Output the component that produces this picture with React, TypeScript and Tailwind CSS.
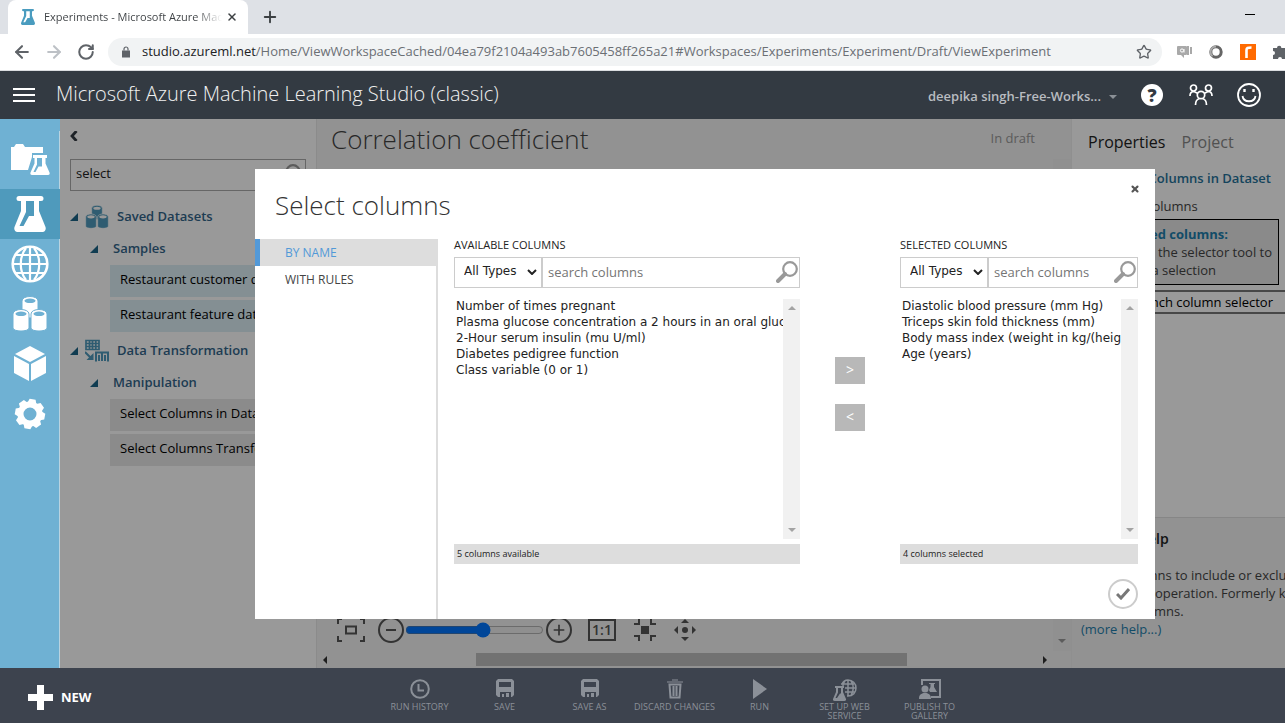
import React from 'react';
import { ArrowLeft, ArrowRight, Plus, RotateCw, Star, X } from 'lucide-react';

const datasets = ['Restaurant customer data', 'Restaurant feature data'];
const modules = ['Select Columns in Dataset', 'Select Columns Transform'];

const availableColumns = [
  'Number of times pregnant',
  'Plasma glucose concentration a 2 hours in an oral glucose tolerance test',
  '2-Hour serum insulin (mu U/ml)',
  'Diabetes pedigree function',
  'Class variable (0 or 1)',
];

const selectedColumns = [
  'Diastolic blood pressure (mm Hg)',
  'Triceps skin fold thickness (mm)',
  'Body mass index (weight in kg/(height in m)^2)',
  'Age (years)',
];

type IconProps = { className?: string };

const FlaskIcon = ({ className }: IconProps) => (
  <svg viewBox="0 0 32 36" className={className} fill="currentColor" aria-hidden="true">
    <path
      fillRule="evenodd"
      d="M5 0h22a1.500 1.500 0 0 1 0 5h-2v10l6.500 16c.8 2.500-.5 5-3 5h-25c-2.500 0-3.800-2.500-3-5L7 15V5H5a1.500 1.500 0 0 1 0-5ZM12 5v11L5.500 30h4l5.500-10h5V5Z"
    />
  </svg>
);

const FolderFlaskIcon = ({ className }: IconProps) => (
  <svg viewBox="0 0 40 32" className={className} fill="currentColor" aria-hidden="true">
    <path d="M1 3h3l2-3h7l2 3h18v6H22v4l-4 13H1Z" />
    <path
      fillRule="evenodd"
      d="M23 11h14v3h-1.500v5.500l4 9c.5 1.500 0 2.500-1.500 2.500H22c-1.500 0-2-1-1.500-2.500l4-9V14H23Zm4 3v6.500L23.500 28h2l3-5.500H32V14Z"
    />
  </svg>
);

const GlobeIcon = ({ className }: IconProps) => (
  <svg viewBox="0 0 38 38" className={className} fill="none" stroke="currentColor" strokeWidth="2.600" aria-hidden="true">
    <circle cx="19" cy="19" r="17.300" />
    <path d="M19 2v34M2 19h34M5 10h28M5 28h28M15 3c-7 9-7 23 0 32M23 3c7 9 7 23 0 32" strokeWidth="2.200" />
  </svg>
);

const CylindersIcon = ({ className }: IconProps) => (
  <svg viewBox="0 0 34 36" className={className} aria-hidden="true">
    {[
      [9, 0],
      [0, 13],
      [18, 13],
    ].map(([x, y]) => (
      <g key={`${x}-${y}`} transform={`translate(${x} ${y})`}>
        <path
          d="M0 5c0-6 16-6 16 0v14c0 4-16 4-16 0Z"
          fill="currentColor"
          stroke="var(--cut)"
          strokeWidth="1"
        />
        <ellipse cx="8" cy="4.800" rx="5.500" ry="2.300" fill="var(--cut)" />
      </g>
    ))}
  </svg>
);

const CubeIcon = ({ className }: IconProps) => (
  <svg viewBox="0 0 34 36" className={className} fill="currentColor" aria-hidden="true">
    <path d="M17 0 32 8 17 16 2 8ZM1 10l15 8v17L1 27ZM33 10l-15 8v17l15-8Z" />
  </svg>
);

const GearIcon = ({ className }: IconProps) => (
  <svg viewBox="0 0 32 32" className={className} aria-hidden="true">
    <circle cx="16" cy="16" r="9.500" fill="none" stroke="currentColor" strokeWidth="6" />
    {[10, 55, 100, 145, 190, 235, 280, 325].map((deg) => (
      <path key={deg} d="M11.500 5 13 1h6l1.500 4Z" fill="currentColor" transform={`rotate(${deg} 16 16)`} />
    ))}
  </svg>
);

const TransformIcon = ({ className }: IconProps) => (
  <svg viewBox="0 0 24 24" className={className} fill="none" stroke="currentColor" aria-hidden="true">
    <path d="M1 1.500h13v9H1ZM1 4.500h13M1 7.500h13M4.500 1.500v9M7.500 1.500v9M10.800 1.500v9" strokeWidth="1.700" />
    <path d="m0 13 6 6" strokeWidth="2" />
    <path d="M8.500 14v7h-7Z" fill="currentColor" stroke="none" />
    <path d="M11 22.500v-9h12v9M14 22v-6M17 22v-8M20 22v-6" strokeWidth="2" />
  </svg>
);

const SearchIcon = ({ className }: IconProps) => (
  <svg viewBox="0 0 22 22" className={className} fill="none" stroke="#999999" aria-hidden="true">
    <circle cx="14" cy="8" r="6.800" strokeWidth="2.200" />
    <path d="M9 13 2 20" strokeWidth="4" strokeLinecap="round" />
  </svg>
);

const PeopleIcon = ({ className }: IconProps) => (
  <svg viewBox="0 0 24 22" className={className} fill="none" stroke="currentColor" strokeWidth="1.700" aria-hidden="true">
    <circle cx="4.500" cy="4" r="3" />
    <circle cx="19.500" cy="4" r="3" />
    <circle cx="12" cy="11" r="3.700" />
    <path d="M1 12c0-3 2-4.500 4-4.500l4 2M23 12c0-3-2-4.500-4-4.500l-4 2M6.500 21c0-4 2-6 4-6.500M17.500 21c0-4-2-6-4-6.500" />
  </svg>
);

const SaveIcon = ({ className }: IconProps) => (
  <svg viewBox="0 0 18 18" className={className} fill="currentColor" aria-hidden="true">
    <path fillRule="evenodd" d="M2 0h14l2 2v14l-2 2h-1v-5H4v5H2l-2-2V2ZM3 3v5h12V3Z" />
    <path d="M6 15h2v3H6zM10 14h3v4h-3z" />
  </svg>
);

const actions = [
  {
    label: 'RUN HISTORY',
    icon: (
      <svg viewBox="0 0 20 20" className="size-5" fill="none" stroke="currentColor" strokeWidth="2">
        <circle cx="10" cy="10" r="8.800" />
        <path d="M8.500 5v6.500H14" />
      </svg>
    ),
  },
  { label: 'SAVE', icon: <SaveIcon className="size-[18px]" /> },
  { label: 'SAVE AS', icon: <SaveIcon className="size-[18px]" /> },
  {
    label: 'DISCARD CHANGES',
    icon: (
      <svg viewBox="0 0 16 20" className="h-5 w-4" fill="none" stroke="currentColor" strokeWidth="2">
        <path d="M0 3h16M5 1h6" strokeWidth="1.200" />
        <path d="M2.500 5.500h11l-1 13h-9ZM6.500 7v10M9.500 7v10" />
      </svg>
    ),
  },
  {
    label: 'RUN',
    icon: (
      <svg viewBox="0 0 14 20" className="h-5 w-3.5" fill="currentColor">
        <path d="M0 0v20l14-10Z" />
      </svg>
    ),
  },
  {
    label: 'SET UP WEB SERVICE',
    icon: (
      <svg viewBox="0 0 24 22" className="h-[22px] w-6" fill="none" stroke="currentColor">
        <path
          d="M9 5.500C10 2.500 12.500 1 15 1c4.500 0 8 3.500 8 8s-3 8-8 8h-1M15 1v16M8 5h13M12 9h11M12 13h9.500M12 2c-1 1-2 3-2 5M18 2c3 4 3 10 0 14"
          strokeWidth="1.500"
        />
        <path
          fill="currentColor"
          stroke="none"
          fillRule="evenodd"
          d="M2 7h9v2h-1v4l3 7c.3 1.500-.5 2-1.500 2h-10C.5 22-.3 21.500 0 20l3-7V9H2Zm3 2v4.500L2.500 19H4l3-4.500h1V9Z"
        />
      </svg>
    ),
  },
  {
    label: 'PUBLISH TO GALLERY',
    icon: (
      <svg viewBox="0 0 22 20" className="h-5 w-[22px]" fill="currentColor">
        <path d="M2 6V0h20v19H12v-2h8V2H4v4Z" />
        <circle cx="6" cy="10" r="3.500" />
        <path d="M0 20c0-5 2.500-5 4.500-6h3c2 1 4.500 1 4.500 6ZM10 4h6v1h-1v3l3 5h-7l-1-2 1.500-3V5H10Z" />
      </svg>
    ),
  },
];

const BrowserChrome = () => (
  <div className="shrink-0 border-b border-[#dadce0] bg-white">
    <div className="flex h-[34px] items-start bg-[#dee1e6] pl-2">
      <div className="flex h-[34px] w-60 items-center rounded-t-lg bg-white pl-3">
        <FlaskIcon className="h-4 w-4 shrink-0 text-[#4a9cbf]" />
        <span className="ml-2 flex-1 overflow-hidden whitespace-nowrap bg-linear-to-r from-[#3c4043] from-85% to-transparent bg-clip-text text-[11px] text-transparent">
          Experiments - Microsoft Azure Machine Learning
        </span>
        <button aria-label="Close tab" className="mr-1.5 p-1 text-[#3c4043]">
          <X size={12} strokeWidth={3} />
        </button>
      </div>
      <button aria-label="New tab" className="ml-[13px] mt-2 text-[#3c4043]">
        <Plus size={18} strokeWidth={2.500} />
      </button>
      <button aria-label="Minimize" className="ml-auto mr-7 h-7 w-3">
        <span className="block h-px w-2.5 bg-black" />
      </button>
    </div>
    <div className="flex h-9 items-center pl-3">
      <button aria-label="Back" className="text-[#5f6368]">
        <ArrowLeft size={20} strokeWidth={2.500} />
      </button>
      <button aria-label="Forward" className="ml-3 text-[#bdc1c6]">
        <ArrowRight size={20} strokeWidth={2.500} />
      </button>
      <button aria-label="Reload" className="ml-[13px] text-[#5f6368]">
        <RotateCw size={18} strokeWidth={2.700} />
      </button>
      <div className="ml-[13px] flex h-7 flex-1 items-center overflow-hidden rounded-full bg-[#f1f3f4] pl-3.5 pr-2.5">
        <svg viewBox="0 0 8 11" className="h-3 w-2 shrink-0 text-[#5f6368]" aria-hidden="true">
          <path d="M0 4h8v7H0Z" fill="currentColor" />
          <path d="M2 4V2.500a2 2 0 0 1 4 0V4" fill="none" stroke="currentColor" strokeWidth="1.200" />
        </svg>
        <span className="ml-3 flex-1 overflow-hidden whitespace-nowrap text-[13px] text-[#6b6f74]">
          <span className="text-[#202124]">studio.azureml.net</span>
          /Home/ViewWorkspaceCached/04ea79f2104a493ab7605458ff265a21#Workspaces/Experiments/Experiment/Draft/ViewExperiment
        </span>
        <Star size={16} className="shrink-0 text-[#5f6368]" strokeWidth={2} />
      </div>
      <div className="ml-3.5 flex w-[109px] shrink-0 items-center overflow-hidden">
        <svg viewBox="0 0 16 14" className="h-3.5 w-4 shrink-0" aria-hidden="true">
          <path d="M2 1h8a1 1 0 0 1 1 1v7a1 1 0 0 1-1 1H8v3l-3-3H2a1 1 0 0 1-1-1V2a1 1 0 0 1 1-1ZM11 1h2v9h-2ZM14 2h2v7h-2Z" fill="#a9a9a9" />
          <circle cx="6" cy="5.500" r="1.600" fill="none" stroke="white" />
          <path d="M8 4v3.500" stroke="white" />
        </svg>
        <svg viewBox="0 0 14 14" className="ml-[17px] size-3.5 shrink-0" aria-hidden="true">
          <circle cx="7" cy="7" r="5.200" fill="none" stroke="#666" strokeWidth="3" />
          <path d="M7 1.500A5.500 5.500 0 0 0 1.500 7c0 2 1 3.500 2 4.300" fill="none" stroke="#aaa" strokeWidth="2" />
        </svg>
        <svg viewBox="0 0 16 16" className="ml-[17px] size-4 shrink-0" aria-hidden="true">
          <path d="M0 0h16v16H0Z" fill="#ff6a00" />
          <path d="M6.500 14V6c0-2 1-2.500 5-2.500" fill="none" stroke="white" strokeWidth="2.600" />
        </svg>
        <svg viewBox="0 0 16 16" className="ml-4 size-4 shrink-0" aria-hidden="true">
          <path d="M1 4h4a2.200 2.200 0 0 1 4.400 0H14v4.500a2.200 2.200 0 0 1 0 4V15h-4a2 2 0 0 0-4 0H1v-4a2 2 0 0 0 0-4Z" fill="#5f6368" />
        </svg>
      </div>
    </div>
  </div>
);

const Header = () => (
  <header className="flex h-12 shrink-0 items-center bg-[#333a42] pl-[13px] pr-6 text-white">
    <button aria-label="Menu" className="flex w-[22px] flex-col gap-1">
      <span className="h-0.5 bg-white" />
      <span className="h-0.5 bg-white" />
      <span className="h-0.5 bg-white" />
    </button>
    <h1 className="ml-[21px] whitespace-nowrap pb-0.5 text-xl font-light text-[#f0f0f0]">
      Microsoft Azure Machine Learning Studio (classic)
    </h1>
    <button className="ml-auto flex items-center gap-2 whitespace-nowrap pt-1 text-[13px] font-semibold text-[#b9bcc0]">
      deepika singh-Free-Works...
      <svg viewBox="0 0 8 4" className="h-1 w-2" fill="#8b9096">
        <path d="M0 0h8L4 4Z" />
      </svg>
    </button>
    <button aria-label="Help" className="ml-6 flex size-[22px] items-center justify-center rounded-full bg-white text-lg font-extrabold text-[#333a42]">
      ?
    </button>
    <button aria-label="Community" className="ml-[26px]">
      <PeopleIcon className="h-[22px] w-6" />
    </button>
    <button aria-label="Feedback" className="ml-6">
      <svg viewBox="0 0 24 24" className="size-6" fill="none" stroke="currentColor" strokeWidth="1.800">
        <circle cx="12" cy="12" r="11" />
        <path d="M5.500 13c1 7 12 7 13 0" />
        <path d="M7.500 6v3M16.500 6v3" strokeWidth="2.400" />
      </svg>
    </button>
  </header>
);

const NavRail = () => {
  const items = [
    { label: 'Projects', icon: <FolderFlaskIcon className="h-8 w-10" /> },
    { label: 'Experiments', icon: <FlaskIcon className="h-9 w-8" />, active: true },
    { label: 'Web services', icon: <GlobeIcon className="size-[38px]" /> },
    { label: 'Datasets', icon: <CylindersIcon className="h-9 w-[34px]" /> },
    { label: 'Trained models', icon: <CubeIcon className="h-9 w-[34px]" /> },
    { label: 'Settings', icon: <GearIcon className="size-8" /> },
  ];
  return (
    <nav className="flex w-[60px] shrink-0 flex-col bg-[#6fb1d3] pt-3 text-white [--cut:#6fb1d3]">
      {items.map((item) => (
        <button
          key={item.label}
          aria-label={item.label}
          className={`flex h-[50px] items-center justify-center first:h-[58px] ${item.active ? 'bg-[#4f9abc]' : 'border-r border-[#b9d3e0]'}`}
        >
          {item.icon}
        </button>
      ))}
      <div className="flex-1 border-r border-[#b9d3e0]" />
    </nav>
  );
};

const Caret = () => (
  <svg viewBox="0 0 8 8" className="size-2" fill="#1c6488" aria-hidden="true">
    <path d="M8 0v8H0Z" />
  </svg>
);

const ModulePanel = () => (
  <aside className="flex w-64 shrink-0 flex-col bg-white px-2.5 text-[13px]">
    <button aria-label="Collapse panel" className="mt-3 h-[10px] w-2.5">
      <svg viewBox="0 0 8 10" className="h-2.5 w-2" fill="none" stroke="#333a42" strokeWidth="2.800">
        <path d="M6.500 0 2 5l4.500 5" />
      </svg>
    </button>
    <div className="mt-[18px] flex h-8 shrink-0 items-center border border-[#aaaaaa] pr-1">
      <input
        aria-label="Search modules"
        defaultValue="select"
        className="min-w-0 flex-1 bg-transparent px-[5px] pb-0.5 text-[#222222] outline-none"
      />
      <SearchIcon className="size-[22px]" />
    </div>
    <div className="mt-2.5">
      <button className="flex h-8 w-full items-center font-semibold text-[#33658a]">
        <Caret />
        <CylindersIcon className="ml-[7px] size-6 text-[#4f9abc] [--cut:#ffffff]" />
        <span className="ml-2">Saved Datasets</span>
      </button>
      <button className="flex h-8 w-full items-center pl-5 font-semibold text-[#33658a]">
        <Caret />
        <span className="ml-[15px]">Samples</span>
      </button>
      {datasets.map((name) => (
        <div key={name} className="mb-[3px] ml-10 flex h-8 items-center overflow-hidden whitespace-nowrap bg-[#dceef5] pb-0.5 pl-2.5 text-black">
          {name}
        </div>
      ))}
      <button className="flex h-8 w-full items-center font-semibold text-[#33658a]">
        <Caret />
        <TransformIcon className="ml-[7px] size-6 text-[#4f9abc]" />
        <span className="ml-2">Data Transformation</span>
      </button>
      <button className="flex h-8 w-full items-center pl-5 font-semibold text-[#33658a]">
        <Caret />
        <span className="ml-[15px]">Manipulation</span>
      </button>
      {modules.map((name) => (
        <div key={name} className="mb-[3px] ml-10 flex h-8 items-center overflow-hidden whitespace-nowrap bg-[#e8e8e8] pb-0.5 pl-2.5 text-black">
          {name}
        </div>
      ))}
    </div>
  </aside>
);

const ZoomControls = () => (
  <div className="flex h-8 items-center pl-[19px] text-[#555555]">
    <button aria-label="Zoom to selection">
      <svg viewBox="0 0 30 24" className="h-6 w-[30px]" fill="none" stroke="currentColor" strokeWidth="2">
        <path d="M2 6V1h4M24 1h4v5M2 18v5h4M24 23h4v-5M10 8.500h10v7H10Z" />
      </svg>
    </button>
    <button aria-label="Zoom out" className="ml-3 flex size-[26px] items-center justify-center rounded-full border-2 border-[#555555]">
      <span className="h-0.5 w-2.5 bg-[#555555]" />
    </button>
    <input type="range" aria-label="Zoom" defaultValue={57} className="ml-px w-[139px]" />
    <button aria-label="Zoom in" className="ml-0.5 flex size-[26px] items-center justify-center rounded-full border-2 border-[#555555]">
      <Plus size={16} strokeWidth={2.500} />
    </button>
    <button className="ml-4 flex h-[22px] w-7 items-center justify-center border-2 border-[#555555] text-sm font-semibold">
      1:1
    </button>
    <button aria-label="Fit to screen" className="ml-[18px]">
      <svg viewBox="0 0 22 22" className="size-[22px]" fill="none" stroke="currentColor" strokeWidth="2">
        <path d="M0 5h5V0M17 0v5h5M0 17h5v5M17 22v-5h5" />
        <path d="M7 7h8v8H7Z" fill="currentColor" stroke="none" />
      </svg>
    </button>
    <button aria-label="Pan" className="ml-[18px]">
      <svg viewBox="0 0 22 22" className="size-[22px]" fill="currentColor">
        <circle cx="11" cy="11" r="3" />
        <path d="m11 0 4 4H7ZM11 22l4-4H7ZM0 11l4-4v8ZM22 11l-4-4v8Z" />
      </svg>
    </button>
  </div>
);

const Canvas = () => (
  <main className="flex min-w-0 flex-1 flex-col border-l border-[#e8e8e8] bg-[#f3f3f3]">
    <div className="flex items-center justify-between pl-[14px] pr-9">
      <h2 className="text-[26px] leading-10 font-light text-[#444444]">Correlation coefficient</h2>
      <span className="text-[13px] text-[#999999]">In draft</span>
    </div>
    <div className="flex flex-1">
      <div className="flex flex-1 flex-col justify-end pb-[5px]">
        <ZoomControls />
      </div>
      <div className="flex w-[18px] flex-col items-center justify-end bg-[#f1f1f1] pb-2">
        <svg viewBox="0 0 8 4" className="h-1 w-2" fill="#999999">
          <path d="M0 0h8L4 4Z" />
        </svg>
      </div>
    </div>
    <div className="flex h-[17px] items-center pl-1.5 pr-6">
      <svg viewBox="0 0 4 8" className="h-2 w-1 shrink-0" fill="#333333">
        <path d="M4 0v8L0 4Z" />
      </svg>
      <div className="ml-[149px] mr-[136px] h-[13px] flex-1 bg-[#bfbfbf]" />
      <svg viewBox="0 0 4 8" className="h-2 w-1 shrink-0" fill="#333333">
        <path d="M0 0v8l4-4Z" />
      </svg>
    </div>
  </main>
);

const PropertiesPanel = () => (
  <aside className="flex w-[214px] shrink-0 flex-col overflow-hidden whitespace-nowrap border-l border-[#eeeeee] bg-white text-[13px] text-[#444444]">
    <div className="flex gap-4 pl-4 pt-2.5 text-base leading-[26px]">
      <button className="text-[#222222]">Properties</button>
      <button className="text-[#888888]">Project</button>
    </div>
    <h3 className="mt-[11px] pr-3.5 text-right font-semibold leading-6 text-[#26739b]">Select Columns in Dataset</h3>
    <p className="mt-1.5 pl-[35px] leading-5">Select columns</p>
    <div className="ml-2.5 mr-1.5 mt-[3px] border border-black bg-[#e6e6e6] px-1.5 py-[5px] text-right leading-[18px]">
      <p className="pr-11 font-bold text-[#1f7fad]">Selected columns:</p>
      <p>Launch the selector tool to</p>
      <p className="pr-14">make a selection</p>
    </div>
    <button className="ml-2.5 mt-[5px] h-6 border-y-2 border-[#777777] pr-3 text-right leading-[18px] text-black">
      Launch column selector
    </button>
    <div className="mt-auto h-[151px] border-t border-[#e0e0e0] bg-[#f3f3f3] pl-[9px] pt-3">
      <h3 className="pl-3.5 text-sm font-semibold leading-[18px] text-[#222222]">Quick Help</h3>
      <p className="mt-[18px] leading-[18px]">
        Select columns to include or exclude
        <br />
        from a data operation. Formerly known as
        <br />
        Project Columns.
        <br />
        <a href="#help" className="text-[#1f7fad]">(more help...)</a>
      </p>
    </div>
  </aside>
);

type ColumnListProps = {
  id: string;
  title: string;
  columns: string[];
  status: string;
  className: string;
};

const ColumnList = ({ id, title, columns, status, className }: ColumnListProps) => (
  <section className={className}>
    <label htmlFor={id} className="block h-[18px] text-[11px] leading-3 text-[#222222]">
      {title}
    </label>
    <div className="flex h-[31px] border border-[#cccccc]">
      <div className="relative flex w-[88px] shrink-0 border-r-2 border-[#cccccc]">
        <select
          aria-label={`${title} type`}
          className="w-full appearance-none bg-white pb-0.5 pl-[9px] font-['DejaVu_Sans',sans-serif] text-xs text-[#222222]"
        >
          <option>All Types</option>
        </select>
        <svg viewBox="0 0 10 6" className="pointer-events-none absolute right-1 top-[11px] h-1.5 w-2.5" fill="none" stroke="#222222" strokeWidth="2">
          <path d="m1 1 4 4 4-4" />
        </svg>
      </div>
      <input
        aria-label={`Search ${title.toLowerCase()}`}
        placeholder="search columns"
        className="min-w-0 flex-1 px-[5px] pt-0.5 text-[13px] outline-none placeholder:text-[#757575]"
      />
      <button aria-label="Search" className="mr-px">
        <SearchIcon className="size-[22px]" />
      </button>
    </div>
    <div className="mt-[11px] flex h-60">
      <select
        id={id}
        multiple
        className="min-w-0 flex-1 overflow-hidden bg-white font-['DejaVu_Sans',sans-serif] text-xs text-[#222222] outline-none"
      >
        {columns.map((column) => (
          <option key={column} className="h-4 px-0.5 py-0 leading-4">
            {column}
          </option>
        ))}
      </select>
      <div className="flex w-[17px] flex-col items-center justify-between bg-[#f1f1f1] py-[7px]">
        <svg viewBox="0 0 8 4" className="h-1 w-2" fill="#a3a3a3">
          <path d="M4 0l4 4H0Z" />
        </svg>
        <svg viewBox="0 0 8 4" className="h-1 w-2" fill="#a3a3a3">
          <path d="M0 0h8L4 4Z" />
        </svg>
      </div>
    </div>
    <p className="mt-[5px] h-5 bg-[#dddddd] pl-[3px] text-[9px] leading-5 text-[#222222]">{status}</p>
  </section>
);

const SelectColumnsDialog = () => (
  <div role="dialog" aria-label="Select columns" className="flex h-[450px] w-[900px] shrink-0 flex-col bg-white">
    <div className="flex h-[70px] shrink-0 justify-between pl-5 pr-[15px]">
      <h2 className="pt-4 text-[26px] leading-10 font-light text-[#333333]">Select columns</h2>
      <button aria-label="Close" className="mt-[15px] h-2 text-[#555555]">
        <X size={10} strokeWidth={5} />
      </button>
    </div>
    <div className="flex flex-1">
      <div className="flex w-[183px] flex-col border-r-2 border-[#dddddd] text-xs">
        <button className="h-[27px] border-l-[5px] border-[#5299d8] bg-[#dddddd] pl-[25px] pt-0.5 text-left text-[#5299d8]">
          BY NAME
        </button>
        <button className="h-[27px] pl-[30px] pt-0.5 text-left text-[#444444]">WITH RULES</button>
      </div>
      <div className="flex flex-1 flex-col pl-4 pr-[17px]">
        <div className="flex">
          <ColumnList
            id="available"
            title="AVAILABLE COLUMNS"
            columns={availableColumns}
            status="5 columns available"
            className="w-[346px] shrink-0"
          />
          <div className="flex flex-1 flex-col items-center gap-5 pt-[118px] text-sm text-white">
            <button aria-label="Add column" className="h-[27px] w-[30px] bg-[#b8b8b8]">&gt;</button>
            <button aria-label="Remove column" className="h-[27px] w-[30px] bg-[#b8b8b8]">&lt;</button>
          </div>
          <ColumnList
            id="selected"
            title="SELECTED COLUMNS"
            columns={selectedColumns}
            status="4 columns selected"
            className="w-[238px] shrink-0"
          />
        </div>
        <button aria-label="Confirm" className="ml-auto mt-[15px] flex size-[30px] items-center justify-center rounded-full border-2 border-[#cccccc]">
          <svg viewBox="0 0 14 12" className="h-3 w-3.5" fill="none" stroke="#777777" strokeWidth="3">
            <path d="m1 6 4 4 8-9" />
          </svg>
        </button>
      </div>
    </div>
  </div>
);

const ActionBar = () => (
  <footer className="flex h-[55px] shrink-0 bg-[#3d434e]">
    <button className="flex w-[377px] items-center gap-2 pl-7 pt-1 text-[13px] font-bold text-white">
      <svg viewBox="0 0 25 25" className="size-[25px]" fill="currentColor">
        <path d="M9 0h7v9h9v7h-9v9H9v-9H0V9h9Z" />
      </svg>
      NEW
    </button>
    {actions.map((action) => (
      <button key={action.label} className="flex w-[85px] flex-col items-center pt-[11px] text-[#8b9098]">
        <span className="flex h-[21px] items-start">{action.icon}</span>
        <span className="mt-0.5 max-w-[90px] text-[9px] leading-[9px]">{action.label}</span>
      </button>
    ))}
  </footer>
);

const App = () => {
  return (
    <div className="flex h-screen flex-col overflow-hidden font-['Open_Sans','Noto_Sans',sans-serif]">
      <BrowserChrome />
      <Header />
      <div className="flex min-h-0 flex-1">
        <NavRail />
        <div className="relative flex min-w-0 flex-1">
          <ModulePanel />
          <Canvas />
          <PropertiesPanel />
          <div className="absolute inset-0 flex items-center bg-black/40 pl-[195px]">
            <SelectColumnsDialog />
          </div>
        </div>
      </div>
      <ActionBar />
    </div>
  );
};

export default App;
